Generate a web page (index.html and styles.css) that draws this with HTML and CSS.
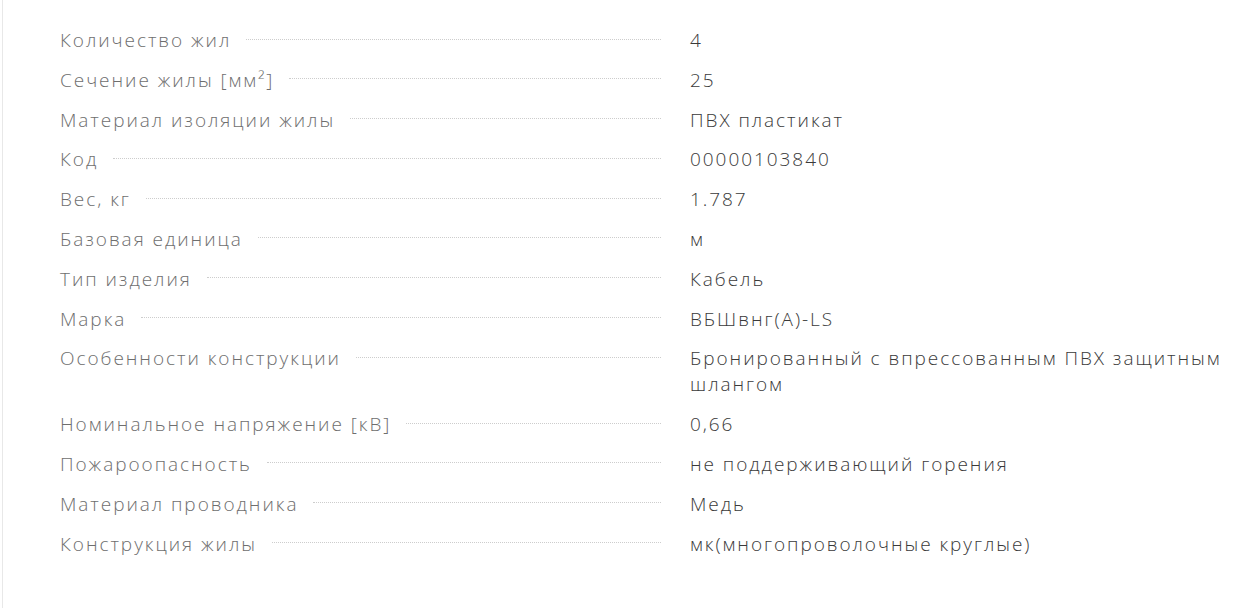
FILE: index.html
```html
<!DOCTYPE html>
<html lang="ru">
<head>
<meta charset="utf-8">
<link rel="stylesheet" href="styles.css">
</head>
<body>
<div class="specs">
  <dl class="list">
    <div class="row"><dt class="label"><span>Количество жил</span><i class="dots"></i></dt><dd class="value">4</dd></div>
    <div class="row"><dt class="label"><span>Сечение жилы [мм²]</span><i class="dots"></i></dt><dd class="value">25</dd></div>
    <div class="row"><dt class="label"><span>Материал изоляции жилы</span><i class="dots"></i></dt><dd class="value">ПВХ пластикат</dd></div>
    <div class="row"><dt class="label"><span>Код</span><i class="dots"></i></dt><dd class="value">00000103840</dd></div>
    <div class="row"><dt class="label"><span>Вес, кг</span><i class="dots"></i></dt><dd class="value">1.787</dd></div>
    <div class="row"><dt class="label"><span>Базовая единица</span><i class="dots"></i></dt><dd class="value">м</dd></div>
    <div class="row"><dt class="label"><span>Тип изделия</span><i class="dots"></i></dt><dd class="value">Кабель</dd></div>
    <div class="row"><dt class="label"><span>Марка</span><i class="dots"></i></dt><dd class="value">ВБШвнг(А)-LS</dd></div>
    <div class="row"><dt class="label"><span>Особенности конструкции</span><i class="dots"></i></dt><dd class="value">Бронированный с впрессованным ПВХ защитным шлангом</dd></div>
    <div class="row"><dt class="label"><span>Номинальное напряжение [кВ]</span><i class="dots"></i></dt><dd class="value">0,66</dd></div>
    <div class="row"><dt class="label"><span>Пожароопасность</span><i class="dots"></i></dt><dd class="value">не поддерживающий горения</dd></div>
    <div class="row"><dt class="label"><span>Материал проводника</span><i class="dots"></i></dt><dd class="value">Медь</dd></div>
    <div class="row"><dt class="label"><span>Конструкция жилы</span><i class="dots"></i></dt><dd class="value">мк(многопроволочные круглые)</dd></div>
  </dl>
</div>
</body>
</html>
```
FILE: styles.css
```css
html, body {
  margin: 0;
  padding: 0;
  background: #fff;
}
body {
  font-family: "Open Sans", "Noto Sans", sans-serif;
  font-weight: 300;
  font-size: 19px;
  letter-spacing: 1.95px;
}
.specs {
  margin-left: 2px;
  border-left: 1px solid #e8e8e8;
  min-height: 608px;
  box-sizing: border-box;
  padding: 27px 15px 0 57px;
}
.list {
  margin: 0;
  display: flex;
  flex-direction: column;
  gap: 13.8px;
}
.row {
  display: grid;
  grid-template-columns: 601px 1fr;
  column-gap: 29px;
  line-height: 26px;
}
.label {
  display: flex;
  align-items: center;
  gap: 15px;
  color: #6e6e6e;
  height: 26px;
}
.label span {
  white-space: nowrap;
}
.dots {
  flex: 1;
  border-bottom: 1px dotted #cdcdcd;
  margin-top: -2px;
}
.value {
  margin: 0;
  color: #3a3a3a;
}
```
